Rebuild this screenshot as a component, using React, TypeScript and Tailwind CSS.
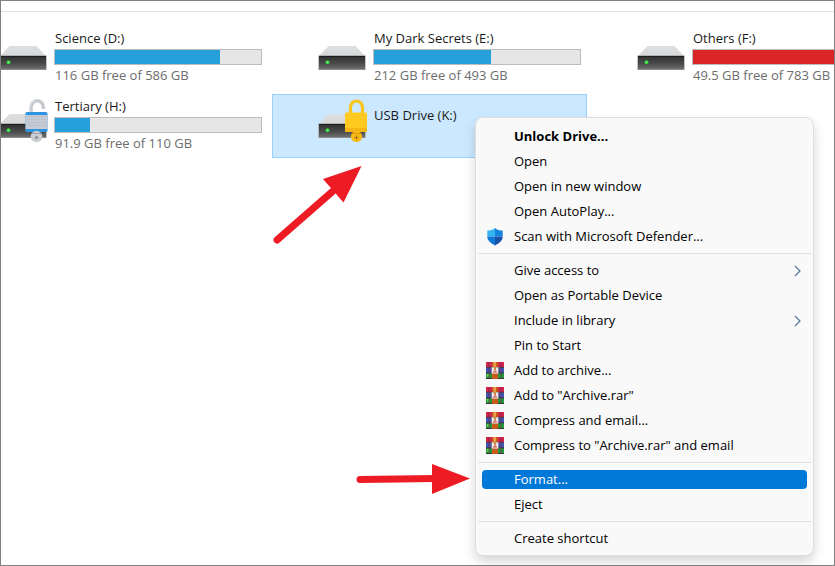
import React from "react";

type Lock = "locked" | "unlocked";

interface Drive {
  name: string;
  free?: string;
  used?: number;
  full?: boolean;
  lock?: Lock;
  selected?: boolean;
}

const drives: Drive[] = [
  { name: "Science (D:)", free: "116 GB free of 586 GB", used: 80 },
  { name: "My Dark Secrets (E:)", free: "212 GB free of 493 GB", used: 57 },
  { name: "Others (F:)", free: "49.5 GB free of 783 GB", used: 94, full: true },
  { name: "Tertiary (H:)", free: "91.9 GB free of 110 GB", used: 17, lock: "unlocked" },
  { name: "USB Drive (K:)", lock: "locked", selected: true },
];

function Padlock({ lock }: { lock: Lock }) {
  if (lock === "locked") {
    return (
      <g>
        <path d="M32.5 18V11.500a6 6.500 0 0 1 12 0V18" fill="none" stroke="#fac61c" strokeWidth="3.2" />
        <rect x="27" y="16.500" width="22" height="19.500" rx="1.5" fill="#ffc91f" />
        <path d="M27 32h22v2.500a1.5 1.5 0 0 1-1.5 1.5h-19a1.5 1.5 0 0 1-1.5-1.5z" fill="#f4b414" />
        <circle cx="38.5" cy="40.500" r="5.6" fill="#f8b916" />
        <path d="M34 37.500h9" stroke="#d99a0b" strokeWidth="1" />
        <path d="M38.5 39.500v4M36.5 41.500h4" stroke="#a8750c" strokeWidth="1" />
      </g>
    );
  }
  return (
    <g>
      <path d="M32 18V11.500a6.2 6.700 0 0 1 12.4 0V13" fill="none" stroke="#c3c8ce" strokeWidth="3.4" />
      <path d="M31 17V11.500a6.8 7.200 0 0 1 5-6.600" fill="none" stroke="#e3e6e9" strokeWidth="1" />
      <rect x="26.500" y="16" width="22" height="20" rx="1.5" fill="#2c94e0" />
      <rect x="26.500" y="19" width="22" height="14" fill="#c5cbd4" />
      <path d="M28 20.500h19M28 23.500h19M28 26.500h19M28 29.500h19" stroke="#b3bbc6" strokeWidth="1" strokeDasharray="1 1" />
      <circle cx="37.500" cy="40.500" r="5.800" fill="#c9ccd0" />
      <path d="M33 37.500h9" stroke="#9ea4ab" strokeWidth="1" />
      <circle cx="37.500" cy="41.500" r="1.500" fill="#858a90" />
    </g>
  );
}

function DriveIcon({ lock }: { lock?: Lock }) {
  return (
    <svg width="50" height="48" viewBox="0 0 50 48" className="shrink-0" aria-hidden="true">
      <defs>
        <linearGradient id="driveFront" x1="0" y1="0" x2="0" y2="1">
          <stop offset="0" stopColor="#303030" />
          <stop offset="0.6" stopColor="#4b4b4b" />
          <stop offset="1" stopColor="#6f6f6f" />
        </linearGradient>
        <linearGradient id="driveTop" x1="0" y1="0" x2="0" y2="1">
          <stop offset="0" stopColor="#dedfe0" />
          <stop offset="1" stopColor="#d6d7d9" />
        </linearGradient>
      </defs>
      <path d="M10.500 18h27L47 28H1z" fill="url(#driveTop)" />
      <rect x="0.500" y="27.500" width="47" height="14.500" fill="#8c8c8c" />
      <rect x="1" y="28" width="46" height="13" fill="url(#driveFront)" />
      <path d="M1 28.500h46" stroke="#1c1c1c" strokeWidth="1" />
      <circle cx="9.500" cy="34.300" r="2" fill="#2fd13a" />
      <circle cx="9.500" cy="34.300" r="0.900" fill="#7bf582" />
      {lock && <Padlock lock={lock} />}
    </svg>
  );
}

function DriveTile({ drive }: { drive: Drive }) {
  return (
    <button
      type="button"
      className={
        "flex h-16 border pl-[45px] text-left " +
        (drive.selected ? "border-[#99d1ff] bg-[#cce8ff]" : "border-transparent")
      }
    >
      <span className="mt-px shrink-0">
        <DriveIcon lock={drive.lock} />
      </span>
      {drive.used === undefined ? (
        <span className="mt-2.5 ml-1.5 leading-5">{drive.name}</span>
      ) : (
        <span className="mt-px ml-[5px] flex w-52 flex-col">
          <span className="pl-px leading-5">{drive.name}</span>
          <span
            role="meter"
            aria-label={drive.name}
            aria-valuemin={0}
            aria-valuemax={100}
            aria-valuenow={drive.used}
            className="mt-px block h-4 border border-[#bcbcbc] bg-[#e6e6e6]"
          >
            <span
              className={"block h-full " + (drive.full ? "bg-[#da2626]" : "bg-[#26a0da]")}
              style={{ width: `${drive.used}%` }}
            />
          </span>
          <span className="pl-px leading-5 text-[#6d6d6d]">{drive.free}</span>
        </span>
      )}
    </button>
  );
}

function ShieldIcon() {
  return (
    <svg width="18" height="18" viewBox="0 0 18 18" aria-hidden="true">
      <path d="M9 0C7 2 4 2.600 1.300 2.600V8.500H9z" fill="#35b3ee" />
      <path d="M9 0C11 2 14 2.600 16.700 2.600V8.500H9z" fill="#1583dc" />
      <path d="M1.300 8.500c0 4.300 3.500 6.600 7.700 9V8.500z" fill="#0f78d4" />
      <path d="M16.700 8.500c0 4.300-3.500 6.600-7.700 9V8.500z" fill="#1751a8" />
    </svg>
  );
}

function ArchiveIcon() {
  return (
    <svg width="18" height="17" viewBox="0 0 18 17" aria-hidden="true">
      <rect width="18" height="5.500" fill="#d5244c" />
      <rect y="5.500" width="18" height="5.500" fill="#3d55b4" />
      <rect y="11" width="18" height="6" fill="#219a3c" />
      <path d="M0 5.300h18M0 10.900h18M0 16.500h18" stroke="#3a2a35" strokeWidth="0.900" />
      <path d="M3 0v5M3 6v4.500M3 11.500V16M15 0v5M15 6v4.500M15 11.500V16" stroke="#7b1f43" strokeWidth="0.700" />
      <rect x="1" y="12" width="1.500" height="2.500" fill="#7bd34f" />
      <rect x="6" width="6" height="17" fill="#c95a1c" />
      <rect x="7.500" width="2.500" height="5" fill="#eaa04a" />
      <rect x="5" y="5" width="8" height="6.500" fill="#8d7b8a" />
      <rect x="6" y="5.500" width="6" height="6" fill="#f1e9e6" />
      <rect x="8" y="4.500" width="2" height="3.500" fill="#c98a4a" />
      <path d="M8 11V9h2v2" fill="none" stroke="#c84a3c" strokeWidth="1" />
    </svg>
  );
}

interface Item {
  label: string;
  icon?: "shield" | "archive";
  submenu?: boolean;
  bold?: boolean;
  active?: boolean;
}

const sections: Item[][] = [
  [
    { label: "Unlock Drive...", bold: true },
    { label: "Open" },
    { label: "Open in new window" },
    { label: "Open AutoPlay..." },
    { label: "Scan with Microsoft Defender...", icon: "shield" },
  ],
  [
    { label: "Give access to", submenu: true },
    { label: "Open as Portable Device" },
    { label: "Include in library", submenu: true },
    { label: "Pin to Start" },
    { label: "Add to archive...", icon: "archive" },
    { label: 'Add to "Archive.rar"', icon: "archive" },
    { label: "Compress and email...", icon: "archive" },
    { label: 'Compress to "Archive.rar" and email', icon: "archive" },
  ],
  [{ label: "Format...", active: true }, { label: "Eject" }],
  [{ label: "Create shortcut" }],
];

function MenuItem({ item }: { item: Item }) {
  return (
    <li role="none" className="flex h-[25px] items-center px-1.5">
      <button
        type="button"
        role="menuitem"
        aria-haspopup={item.submenu ? "menu" : undefined}
        className={
          "flex h-[19px] w-full items-center rounded pr-1.5 pl-1 text-left " +
          (item.active ? "bg-[#0078d7] text-white " : "") +
          (item.bold ? "font-bold" : "")
        }
      >
        <span className="w-7 shrink-0">
          {item.icon === "shield" && <ShieldIcon />}
          {item.icon === "archive" && <ArchiveIcon />}
        </span>
        <span className="flex-1">{item.label}</span>
        {item.submenu && (
          <svg width="7" height="12" viewBox="0 0 7 12" aria-hidden="true">
            <path d="M1 1l5 5-5 5" fill="none" stroke="#56759c" strokeWidth="1.200" />
          </svg>
        )}
      </button>
    </li>
  );
}

function ContextMenu() {
  return (
    <div
      role="menu"
      aria-label="USB Drive (K:)"
      className="absolute top-[116px] left-[474px] w-[339px] rounded-lg border border-[#dedede] bg-[#f9f9f9] pt-1.5 pb-1 text-black shadow-[0_6px_12px_rgba(0,0,0,0.16)]"
    >
      {sections.map((items, i) => (
        <React.Fragment key={i}>
          {i > 0 && <hr className="mx-0.5 my-1 border-[#e0e0e0]" />}
          <ul role="none">
            {items.map((item) => (
              <MenuItem key={item.label} item={item} />
            ))}
          </ul>
        </React.Fragment>
      ))}
    </div>
  );
}

function Arrows() {
  return (
    <svg width="220" height="340" viewBox="0 0 220 340" className="pointer-events-none absolute top-[159px] left-[259px]" aria-hidden="true">
      <g fill="#ed1c24" stroke="#ed1c24" strokeLinecap="round">
        <path d="M17 80L73 31" strokeWidth="7" />
        <path d="M101.500 6L63 19L83.500 42.500z" stroke="none" />
        <path d="M100 319.500L175 318.500" strokeWidth="7" />
        <path d="M210 318.500L172 304V334z" stroke="none" />
      </g>
    </svg>
  );
}

export default function App() {
  return (
    <main className="relative min-h-screen overflow-hidden border border-[#808080] bg-white font-['Open_Sans','Noto_Sans',sans-serif] text-[13px] text-[#1a1a1a]">
      <div className="h-[11px] border-b border-[#e3e3e3]" />
      <div className="mt-3.5 -ml-12 grid grid-cols-[repeat(3,315px)] gap-1">
        {drives.map((drive) => (
          <DriveTile key={drive.name} drive={drive} />
        ))}
      </div>
      <Arrows />
      <ContextMenu />
    </main>
  );
}
